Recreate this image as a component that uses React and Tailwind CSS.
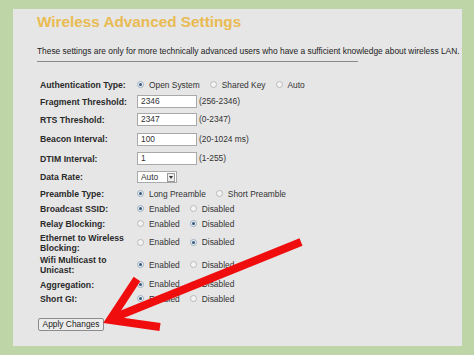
import React from 'react';

const font = { fontFamily: '"Liberation Sans", Arial, sans-serif' };

function Radio({ checked, label }) {
  return (
    <span className="inline-flex items-center">
      <span
        className={
          'w-[7px] h-[7px] rounded-full border flex items-center justify-center ' +
          (checked ? 'border-[#9fb0c0] bg-[#e8eef4]' : 'border-[#b9b9b9] bg-[#f4f4f4]')
        }
      >
        {checked && <span className="w-[3px] h-[3px] rounded-full bg-[#34587a]" />}
      </span>
      <span className="ml-[5px]">{label}</span>
    </span>
  );
}

function Radios({ options, selected }) {
  return (
    <div className="flex items-center gap-[10px]">
      {options.map((o, i) => (
        <Radio key={o} label={o} checked={i === selected} />
      ))}
    </div>
  );
}

function TextBox({ value, range }) {
  return (
    <div className="flex items-center">
      <div className="w-[60px] h-[13px] bg-white border border-[#a9a9a9] pl-[3px] leading-[11px]">{value}</div>
      <span className="ml-[2px]">{range}</span>
    </div>
  );
}

function Select() {
  return (
    <div className="flex items-center w-[40px] h-[12px] bg-white border border-[#a9a9a9] pl-[3px] leading-[10px] justify-between">
      <span>Auto</span>
      <span className="w-[8px] h-[9px] mr-[1px] border border-[#9a9a9a] bg-[#eeeeee] flex items-center justify-center">
        <span className="w-0 h-0 border-l-[2px] border-r-[2px] border-t-[3px] border-l-transparent border-r-transparent border-t-[#333]" />
      </span>
    </div>
  );
}

const onOff = ['Enabled', 'Disabled'];

const rows = [
  { h: 16, label: 'Authentication Type:', ctrl: <Radios options={['Open System', 'Shared Key', 'Auto']} selected={0} /> },
  { h: 17, label: 'Fragment Threshold:', ctrl: <TextBox value="2346" range="(256-2346)" /> },
  { h: 19, label: 'RTS Threshold:', ctrl: <TextBox value="2347" range="(0-2347)" /> },
  { h: 20, label: 'Beacon Interval:', ctrl: <TextBox value="100" range="(20-1024 ms)" /> },
  { h: 19, label: 'DTIM Interval:', ctrl: <TextBox value="1" range="(1-255)" /> },
  { h: 18, label: 'Data Rate:', ctrl: <Select /> },
  { h: 16, label: 'Preamble Type:', ctrl: <Radios options={['Long Preamble', 'Short Preamble']} selected={0} /> },
  { h: 14, label: 'Broadcast SSID:', ctrl: <Radios options={onOff} selected={0} /> },
  { h: 16, label: 'Relay Blocking:', ctrl: <Radios options={onOff} selected={1} /> },
  { h: 21, label: <>Ethernet to Wireless<br />Blocking:</>, ctrl: <Radios options={onOff} selected={1} /> },
  { h: 24, label: <>Wifi Multicast to<br />Unicast:</>, ctrl: <Radios options={onOff} selected={0} /> },
  { h: 15, label: 'Aggregation:', ctrl: <Radios options={onOff} selected={0} /> },
  { h: 14, label: 'Short GI:', ctrl: <Radios options={onOff} selected={0} /> },
];

export default function App() {
  return (
    <div className="relative w-[474px] h-[355px] bg-[#bdd5a7] pt-[9px] pl-[13px] pr-[12px] pb-[9px] overflow-hidden" style={font}>
      <div className="h-full bg-[#e6e6e6] pl-[24px] overflow-hidden text-[#2b2b2b]">
        <div className="mt-[4px] h-[18px] leading-[18px] text-[15.3px] font-bold text-[#e9bb52]">Wireless Advanced Settings</div>
        <div className="mt-[15px] h-[11px] leading-[11px] text-[8.4px] whitespace-nowrap text-[#222]">
          These settings are only for more technically advanced users who have a sufficient knowledge about wireless LAN. These settings should not be changed
        </div>
        <div className="mt-[4px] w-[321px] h-[1px] bg-[#8a8a8a]" />
        <div className="mt-[15px] text-[8.4px]">
          {rows.map((r, i) => (
            <div key={i} className="flex items-center" style={{ height: r.h }}>
              <div className="w-[100px] pl-[3px] font-bold leading-[10px] text-[8.7px] text-[#2a2a2a]">{r.label}</div>
              <div className="flex-1 text-[#333]">{r.ctrl}</div>
            </div>
          ))}
        </div>
        <button className="mt-[12px] ml-[1px] w-[66px] h-[13px] border border-[#8c8c8c] rounded-[2px] bg-[#ececec] text-[8.4px] leading-[11px] text-[#222]">
          Apply Changes
        </button>
      </div>
      <svg className="absolute left-0 top-0 pointer-events-none" width="474" height="355" viewBox="0 0 474 355">
        <line x1="301" y1="242" x2="113" y2="318" stroke="#f00d0d" strokeWidth="8" />
        <polyline points="137,279 110,320 160,327" fill="none" stroke="#f00d0d" strokeWidth="8" strokeLinejoin="miter" />
      </svg>
    </div>
  );
}
